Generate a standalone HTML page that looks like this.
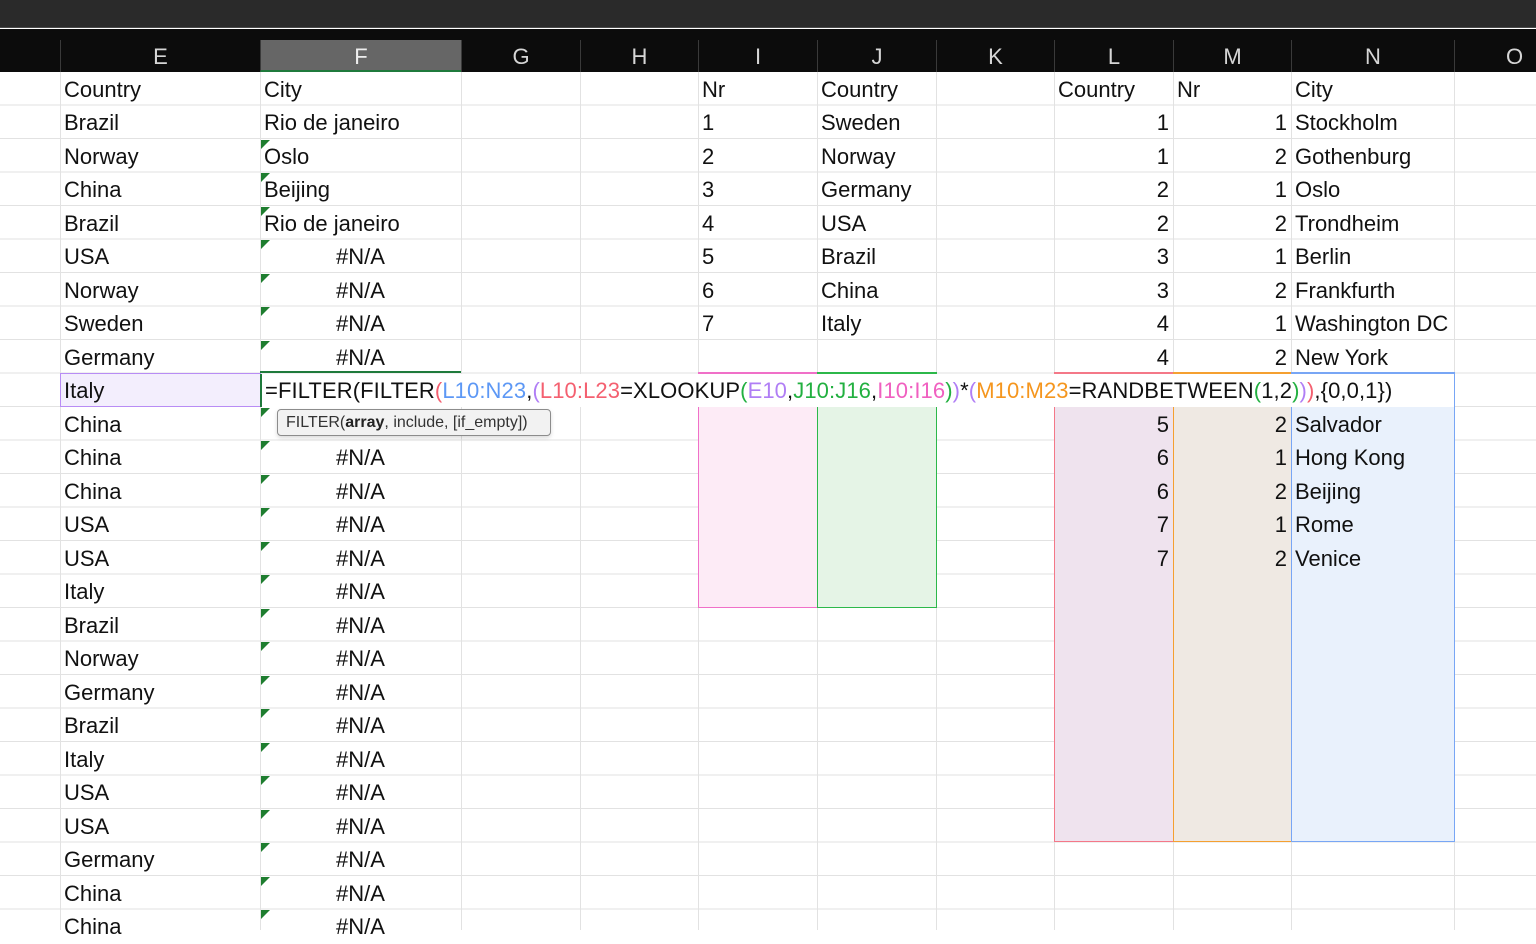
<!DOCTYPE html>
<html><head><meta charset="utf-8"><style>
*{margin:0;padding:0;box-sizing:border-box}
body{width:1536px;height:930px;overflow:hidden;background:#fff;position:relative;font-family:"Liberation Sans",Calibri,sans-serif;color:#111}
.top{position:absolute;left:0;top:0;width:1536px;height:28px;background:#2a2a2a;border-bottom:1px solid #4a4a4a}
.hdr{position:absolute;left:0;top:29px;width:1536px;height:43px;background:#0c0c0c}
.h{position:absolute;top:11px;height:32px;line-height:34px;text-align:center;color:#d6d6d6;font-size:22px;border-left:1px solid #3a3a3a}
.grid{position:absolute;left:0;top:72px;width:1536px;height:858px;background:repeating-linear-gradient(to bottom,transparent 0,transparent 32.5px,#e2e2e2 32.5px,#e2e2e2 33.5px)}
.v{position:absolute;top:72px;width:1px;height:858px;background:#e2e2e2}
.c{position:absolute;height:33px;line-height:35px;font-size:22px;white-space:nowrap;padding-left:4px}
.r{position:absolute;height:33px;line-height:35px;font-size:22px;text-align:right;white-space:nowrap}
.na{position:absolute;left:260px;width:201px;height:33px;line-height:35px;font-size:22px;text-align:center}
.tri{position:absolute;left:261px;width:0;height:0;border-top:9px solid #1e7d2f;border-right:9px solid transparent}
.box{position:absolute}
</style></head><body>
<div class="top"></div>
<div class="hdr">
<div class="h" style="left:60px;width:200px">E</div>
<div class="h" style="left:260px;width:201px;background:#666;color:#eee;border-bottom:2px solid #1f7a3c">F</div>
<div class="h" style="left:461px;width:119px">G</div>
<div class="h" style="left:580px;width:118px">H</div>
<div class="h" style="left:698px;width:119px">I</div>
<div class="h" style="left:817px;width:119px">J</div>
<div class="h" style="left:936px;width:118px">K</div>
<div class="h" style="left:1054px;width:119px">L</div>
<div class="h" style="left:1173px;width:118px">M</div>
<div class="h" style="left:1291px;width:163px">N</div>
<div class="h" style="left:1454px;width:120px">O</div>
</div>
<div class="grid"></div>
<div class="v" style="left:60px"></div><div class="v" style="left:260px"></div><div class="v" style="left:461px"></div><div class="v" style="left:580px"></div><div class="v" style="left:698px"></div><div class="v" style="left:817px"></div><div class="v" style="left:936px"></div><div class="v" style="left:1054px"></div><div class="v" style="left:1173px"></div><div class="v" style="left:1291px"></div><div class="v" style="left:1454px"></div>

<!-- highlight ranges -->
<div class="box" style="left:60px;top:373px;width:201px;height:34px;background:#f3eefd;border:1px solid #b88cf5"></div>
<div class="box" style="left:698px;top:373px;width:120px;height:235px;background:#fdebf6;border:1px solid #f070c8"></div>
<div class="box" style="left:817px;top:373px;width:120px;height:235px;background:#e5f4e6;border:1px solid #2cb84a"></div>
<div class="box" style="left:1054px;top:373px;width:120px;height:469px;background:#efe3ee;border:1px solid #f47888"></div>
<div class="box" style="left:1173px;top:373px;width:119px;height:469px;background:#efe9e3;border:1px solid #f5a030"></div>
<div class="box" style="left:1291px;top:373px;width:164px;height:469px;background:#e9f1fc;border:1px solid #78a6f5"></div>
<div class="box" style="left:260px;top:371px;width:201px;height:2px;background:#1f7a3c"></div>

<!-- E column -->
<div class="c" style="left:60px;top:72px">Country</div>
<div class="c" style="left:60px;top:105px">Brazil</div>
<div class="c" style="left:60px;top:139px">Norway</div>
<div class="c" style="left:60px;top:172px">China</div>
<div class="c" style="left:60px;top:206px">Brazil</div>
<div class="c" style="left:60px;top:239px">USA</div>
<div class="c" style="left:60px;top:273px">Norway</div>
<div class="c" style="left:60px;top:306px">Sweden</div>
<div class="c" style="left:60px;top:340px">Germany</div>
<div class="c" style="left:60px;top:373px">Italy</div>
<div class="c" style="left:60px;top:407px">China</div>
<div class="c" style="left:60px;top:440px">China</div>
<div class="c" style="left:60px;top:474px">China</div>
<div class="c" style="left:60px;top:507px">USA</div>
<div class="c" style="left:60px;top:541px">USA</div>
<div class="c" style="left:60px;top:574px">Italy</div>
<div class="c" style="left:60px;top:608px">Brazil</div>
<div class="c" style="left:60px;top:641px">Norway</div>
<div class="c" style="left:60px;top:675px">Germany</div>
<div class="c" style="left:60px;top:708px">Brazil</div>
<div class="c" style="left:60px;top:742px">Italy</div>
<div class="c" style="left:60px;top:775px">USA</div>
<div class="c" style="left:60px;top:809px">USA</div>
<div class="c" style="left:60px;top:842px">Germany</div>
<div class="c" style="left:60px;top:876px">China</div>
<div class="c" style="left:60px;top:909px">China</div>

<!-- F column -->
<div class="c" style="left:260px;top:72px">City</div>
<div class="c" style="left:260px;top:105px">Rio de janeiro</div>
<div class="c" style="left:260px;top:139px">Oslo</div>
<div class="c" style="left:260px;top:172px">Beijing</div>
<div class="c" style="left:260px;top:206px">Rio de janeiro</div>
<div class="na" style="top:239px">#N/A</div><div class="na" style="top:273px">#N/A</div><div class="na" style="top:306px">#N/A</div><div class="na" style="top:340px">#N/A</div>
<div class="na" style="top:440px">#N/A</div><div class="na" style="top:474px">#N/A</div><div class="na" style="top:507px">#N/A</div><div class="na" style="top:541px">#N/A</div><div class="na" style="top:574px">#N/A</div><div class="na" style="top:608px">#N/A</div><div class="na" style="top:641px">#N/A</div><div class="na" style="top:675px">#N/A</div><div class="na" style="top:708px">#N/A</div><div class="na" style="top:742px">#N/A</div><div class="na" style="top:775px">#N/A</div><div class="na" style="top:809px">#N/A</div><div class="na" style="top:842px">#N/A</div><div class="na" style="top:876px">#N/A</div><div class="na" style="top:909px">#N/A</div>
<div class="tri" style="top:140px"></div><div class="tri" style="top:173px"></div><div class="tri" style="top:207px"></div><div class="tri" style="top:240px"></div><div class="tri" style="top:274px"></div><div class="tri" style="top:307px"></div><div class="tri" style="top:341px"></div><div class="tri" style="top:408px"></div><div class="tri" style="top:441px"></div><div class="tri" style="top:475px"></div><div class="tri" style="top:508px"></div><div class="tri" style="top:542px"></div><div class="tri" style="top:575px"></div><div class="tri" style="top:609px"></div><div class="tri" style="top:642px"></div><div class="tri" style="top:676px"></div><div class="tri" style="top:709px"></div><div class="tri" style="top:743px"></div><div class="tri" style="top:776px"></div><div class="tri" style="top:810px"></div><div class="tri" style="top:843px"></div><div class="tri" style="top:877px"></div><div class="tri" style="top:910px"></div>

<!-- I, J -->
<div class="c" style="left:698px;top:72px">Nr</div>
<div class="c" style="left:698px;top:105px">1</div><div class="c" style="left:698px;top:139px">2</div><div class="c" style="left:698px;top:172px">3</div><div class="c" style="left:698px;top:206px">4</div><div class="c" style="left:698px;top:239px">5</div><div class="c" style="left:698px;top:273px">6</div><div class="c" style="left:698px;top:306px">7</div>
<div class="c" style="left:817px;top:72px">Country</div>
<div class="c" style="left:817px;top:105px">Sweden</div><div class="c" style="left:817px;top:139px">Norway</div><div class="c" style="left:817px;top:172px">Germany</div><div class="c" style="left:817px;top:206px">USA</div><div class="c" style="left:817px;top:239px">Brazil</div><div class="c" style="left:817px;top:273px">China</div><div class="c" style="left:817px;top:306px">Italy</div>

<!-- L, M, N -->
<div class="c" style="left:1054px;top:72px">Country</div>
<div class="c" style="left:1173px;top:72px">Nr</div>
<div class="c" style="left:1291px;top:72px">City</div>
<div class="r" style="left:1054px;width:115px;top:105px">1</div><div class="r" style="left:1173px;width:114px;top:105px">1</div><div class="c" style="left:1291px;top:105px">Stockholm</div>
<div class="r" style="left:1054px;width:115px;top:139px">1</div><div class="r" style="left:1173px;width:114px;top:139px">2</div><div class="c" style="left:1291px;top:139px">Gothenburg</div>
<div class="r" style="left:1054px;width:115px;top:172px">2</div><div class="r" style="left:1173px;width:114px;top:172px">1</div><div class="c" style="left:1291px;top:172px">Oslo</div>
<div class="r" style="left:1054px;width:115px;top:206px">2</div><div class="r" style="left:1173px;width:114px;top:206px">2</div><div class="c" style="left:1291px;top:206px">Trondheim</div>
<div class="r" style="left:1054px;width:115px;top:239px">3</div><div class="r" style="left:1173px;width:114px;top:239px">1</div><div class="c" style="left:1291px;top:239px">Berlin</div>
<div class="r" style="left:1054px;width:115px;top:273px">3</div><div class="r" style="left:1173px;width:114px;top:273px">2</div><div class="c" style="left:1291px;top:273px">Frankfurth</div>
<div class="r" style="left:1054px;width:115px;top:306px">4</div><div class="r" style="left:1173px;width:114px;top:306px">1</div><div class="c" style="left:1291px;top:306px">Washington DC</div>
<div class="r" style="left:1054px;width:115px;top:340px">4</div><div class="r" style="left:1173px;width:114px;top:340px">2</div><div class="c" style="left:1291px;top:340px">New York</div>
<div class="r" style="left:1054px;width:115px;top:407px">5</div><div class="r" style="left:1173px;width:114px;top:407px">2</div><div class="c" style="left:1291px;top:407px">Salvador</div>
<div class="r" style="left:1054px;width:115px;top:440px">6</div><div class="r" style="left:1173px;width:114px;top:440px">1</div><div class="c" style="left:1291px;top:440px">Hong Kong</div>
<div class="r" style="left:1054px;width:115px;top:474px">6</div><div class="r" style="left:1173px;width:114px;top:474px">2</div><div class="c" style="left:1291px;top:474px">Beijing</div>
<div class="r" style="left:1054px;width:115px;top:507px">7</div><div class="r" style="left:1173px;width:114px;top:507px">1</div><div class="c" style="left:1291px;top:507px">Rome</div>
<div class="r" style="left:1054px;width:115px;top:541px">7</div><div class="r" style="left:1173px;width:114px;top:541px">2</div><div class="c" style="left:1291px;top:541px">Venice</div>

<!-- formula edit -->
<div style="position:absolute;left:260px;top:374px;width:1194px;height:33px;background:#fff;border-left:2px solid #1f7a3c"></div>
<div class="box" style="left:698px;top:372px;width:119px;height:2px;background:#f070c8"></div>
<div class="box" style="left:817px;top:372px;width:120px;height:2px;background:#2cb84a"></div>
<div class="box" style="left:1054px;top:372px;width:119px;height:2px;background:#f47888"></div>
<div class="box" style="left:1173px;top:372px;width:118px;height:2px;background:#f5a030"></div>
<div class="box" style="left:1291px;top:372px;width:164px;height:2px;background:#78a6f5"></div>
<div class="c" style="left:261px;top:373px;font-size:22px;letter-spacing:0.1px">=FILTER(FILTER<span style="color:#f46070">(</span><span style="color:#5d98f5">L10:N23</span>,<span style="color:#b07ef5">(</span><span style="color:#f46070">L10:L23</span>=XLOOKUP<span style="color:#22b040">(</span><span style="color:#b07ef5">E10</span>,<span style="color:#22b040">J10:J16</span>,<span style="color:#f060c0">I10:I16</span><span style="color:#22b040">)</span><span style="color:#b07ef5">)</span>*<span style="color:#b07ef5">(</span><span style="color:#f5961e">M10:M23</span>=RANDBETWEEN<span style="color:#22b040">(</span>1,2<span style="color:#22b040">)</span><span style="color:#b07ef5">)</span><span style="color:#f46070">)</span>,{0,0,1})</div>

<!-- tooltip -->
<div style="position:absolute;left:277px;top:409px;width:274px;height:27px;background:#f2f2f2;border:1px solid #8c8c8c;border-radius:4px;box-shadow:0 2px 4px rgba(0,0,0,.15);font-size:16px;line-height:25px;padding-left:8px;color:#333;white-space:nowrap">FILTER(<b style="color:#222">array</b>, include, [if_empty])</div>
</body></html>
